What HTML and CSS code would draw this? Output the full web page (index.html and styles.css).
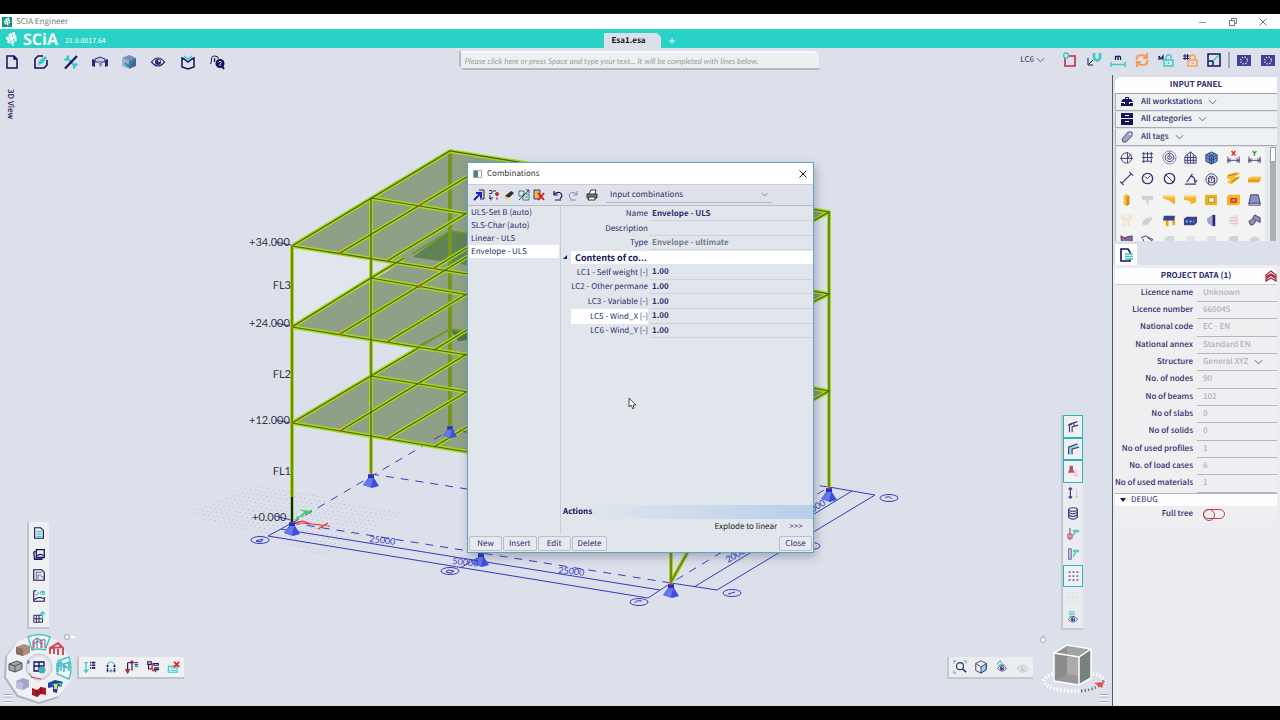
FILE: index.html
```html
<!DOCTYPE html>
<html lang="en">
<head>
<meta charset="utf-8">
<title>SCIA Engineer</title>
<link rel="stylesheet" href="styles.css">
</head>
<body>
<svg class="defs" aria-hidden="true">
  <symbol id="chev" viewBox="0 0 10 6"><path d="M1 1l4 4 4-4" fill="none" stroke="currentColor"/></symbol>
  <symbol id="support" viewBox="-9 -1 18 16"><path d="M-3 0h6v4l5 8-7 2-9-3 5-7z" fill="#3f4fdc"/><path d="M-2 4l-6 7 8 2 2-9z" fill="#6577ee"/><path d="M-3 1h6v3h-6z" fill="#2932a8"/></symbol>
  <symbol id="leaf" viewBox="0 0 12 14"><g fill="currentColor"><circle cx="8" cy="2.5" r="1.6"/><circle cx="5" cy="4" r="1.8"/><circle cx="9" cy="5.5" r="1.8"/><circle cx="2.5" cy="7" r="1.6"/><circle cx="6" cy="7.2" r="1.8"/><circle cx="9.7" cy="8.5" r="1.3"/><circle cx="3.5" cy="10" r="1.5"/><circle cx="7" cy="10.5" r="1.6"/></g><path d="M6 11l2 3" stroke="currentColor"/></symbol>
  <symbol id="eye" viewBox="0 0 16 16"><path d="M1.500 8q6.500-8 13 0-6.500 8-13 0z" fill="none" stroke="currentColor" stroke-width="1.200"/><circle cx="8" cy="8" r="3" fill="currentColor"/><circle cx="9" cy="7" r=".9" fill="#fff"/></symbol>
  <symbol id="film" viewBox="0 0 16 16"><path d="M1 3h14v11H1z" fill="#3f419b"/><circle cx="8" cy="8.5" r="3.4" fill="none" stroke="#fffbd0" stroke-width="1.2" stroke-dasharray="1.2 1.5"/></symbol>
  <symbol id="burger" viewBox="0 0 10 10"><path d="M1 1.5h8M1 5h8M1 8.5h8" stroke="#a3a7b5"/><path d="M1 2.5h8M1 6h8M1 9.5h8" stroke="#fff"/></symbol>
</svg>
<div class="app">
  <div class="titlebar">
    <span class="appicon"><svg width="8" height="9"><use href="#leaf"/></svg></span>
    <span class="apptitle">SCIA Engineer</span>
    <div class="wincontrols">
      <button aria-label="Minimize"><svg width="10" height="10"><path d="M1 5.500h7" stroke="#999"/></svg></button>
      <button aria-label="Restore"><svg width="10" height="10" fill="none" stroke="#777"><path d="M1.500 3.500h5v5h-5zM3.500 3V1.500h5v5H7"/></svg></button>
      <button aria-label="Close window"><svg width="10" height="10"><path d="M1.500 1.500l7 7M8.500 1.500l-7 7" stroke="#777"/></svg></button>
    </div>
  </div>
  <header class="brandbar">
    <div class="brand"><svg width="13" height="15"><use href="#leaf"/></svg><b>SCiA</b><small>21.0.0017.64</small></div>
    <div class="tabs"><button class="tab">Esa1.esa</button><button class="addtab" aria-label="New tab"><svg width="8" height="8"><path d="M4 1v6M1 4h6" stroke="#dff"/></svg></button></div>
  </header>
  <div class="toolbar">
    <nav class="mainmenu">
      <button aria-label="File"><svg viewBox="0 0 16 16" class="n"><path d="M3 2h7l3 3v9H3zM10 2v3h3" stroke-width="1.500"/></svg></button>
      <button aria-label="Edit"><svg viewBox="0 0 16 16" class="n"><path d="M10 2H5L2 5v9h9l3-3V6" stroke-width="1.600"/><path d="M5 11l1-4 6-5 2 2-5 6z" fill="#39c9c6" stroke="none"/></svg></button>
      <button aria-label="Tools"><svg viewBox="0 0 16 16" class="n"><path d="M4 4l8 8M1.500 5q3.500 2 3.500-3.500M14.500 11q-3.500-2-3.500 3.500" stroke="#39c9c6" stroke-width="2.400"/><path d="M2 14.500L14 2" stroke-width="2.200"/></svg></button>
      <button aria-label="Structure"><svg viewBox="0 0 16 16"><path d="M0 5l3 1v7l-3-1zM16 5l-3 1v7l3-1z" fill="#292a74"/><path d="M3 5l5-2 5 2v3H3z" fill="#c8cbdc" stroke="#292a74"/><path d="M6 7h4v5l-2 1-1-3z" fill="#8b8fad"/></svg></button>
      <button aria-label="Results"><svg viewBox="0 0 16 16"><path d="M1 4l7-3 7 3-7 3z" fill="#7f8ac0"/><path d="M1 4l7 3v8l-7-3z" fill="#9fb0cf"/><path d="M8 7l7-3v8l-7 3z" fill="#575b9b"/><path d="M4 9l3 3 6-7" fill="none" stroke="#21949f" stroke-width="2"/></svg></button>
      <button aria-label="View"><svg viewBox="0 0 16 16" class="navy"><use href="#eye"/></svg></button>
      <button aria-label="Libraries"><svg viewBox="0 0 16 16" class="n"><path d="M2 4v9l6 2 6-2V4l-2 1-4 3-4-3z" stroke-width="1.500"/><path d="M4 2l4 3 4-3" class="t"/></svg></button>
      <button aria-label="Help"><svg viewBox="0 0 16 16" class="n"><path d="M1.500 10l1-3q-1-5 3-5t4 3" stroke-width="1"/><path d="M5.500 4v4"/><circle cx="11" cy="9.500" r="4.500" fill="#15135c" stroke="none"/><path d="M13 12l2 3" stroke-width="2"/><path d="M9.500 8.500q1.500-3 3 0L11 10v2" stroke="#fff" stroke-width=".9"/></svg></button>
    </nav>
    <div class="searchwrap"><input class="search" aria-label="Command line" placeholder="Please click here or press Space and type your text... It will be completed with lines below."></div>
    <div class="viewtools">
      <label class="pick lc"><select aria-label="Load case"><option>LC6</option></select><svg class="chev" width="9" height="6"><use href="#chev"/></svg></label>
      <button aria-label="Selection"><svg viewBox="0 0 16 16" fill="none"><path d="M3 4h10v10H3z" stroke="#c5283c" stroke-width="1.600"/><circle cx="4" cy="3.500" r="2.500" class="t" fill="#dce0ea"/></svg></button>
      <button aria-label="Snap"><svg viewBox="0 0 16 16" class="n"><path d="M8 1v5q3 5 6 0V1" class="t thick"/><path d="M2 6v7h5M3 12l4-4" stroke-width="1"/></svg></button>
      <button aria-label="Units"><svg viewBox="0 0 16 16" class="n"><path d="M5.500 8V4M5.500 5q2.500-2 2.500 1v2M8 5q2.500-2 2.500 1v2" stroke-width="1.300"/><path d="M1 10v5M15 10v5M1 12.500h14" class="t"/></svg></button>
      <button aria-label="Regenerate"><svg viewBox="0 0 16 16" fill="none" stroke="#f79a5b" stroke-width="2"><path d="M2.500 8q0-5 5-5 3 0 5 2M13.500 8q0 5-5 5-3 0-5-2M13 1v5H9M3 15v-5h4"/></svg></button>
      <button aria-label="Lock model"><svg viewBox="0 0 16 16" class="n"><path d="M1 8V4M1 4l2 3 2-3v4" stroke-width="1.200"/><path d="M6 8h9v6H6zM8 8V5q2-4 5-1v3M10.500 10v2" class="t"/></svg></button>
      <button aria-label="Lock grid"><svg viewBox="0 0 16 16" class="n"><path d="M3 2v6M5.500 2v6M1 4h7M1 6.500h6" stroke-width="1"/><path d="M6 8h9v6H6zM8 8V5q2-4 5-1v4M10.500 10v2" stroke="#f5a45e" stroke-width="1.600"/></svg></button>
      <button aria-label="Fit window"><svg viewBox="0 0 16 16" class="n"><path d="M2 8V2h12v12H8" stroke-width="1.500"/><path d="M2 9h5v5H2z" stroke-width="1.500"/><path d="M7 9l6-6" class="t"/></svg></button>
      <span class="divider"></span>
      <button aria-label="View set 1"><svg><use href="#film"/></svg></button>
      <button aria-label="View set 2"><svg><use href="#film"/></svg></button>
    </div>
  </div>

  <div class="workspace">
    <main class="canvas">
      <span class="viewname">3D View</span>
      <svg class="scene" viewBox="0 75 1112 631" role="img" aria-label="3D frame structure">
        <defs><pattern id="dots" width="5" height="4" patternUnits="userSpaceOnUse" patternTransform="rotate(9) skewX(-35)"><rect width="1" height="1" fill="#b1b5be"/></pattern></defs>
        <path d="M185 514L256 484 406 512 325 556z" fill="url(#dots)"/>
        <path d="M292 246L371 258V278L292 327z" fill="#e1e5ed"/>
        <path d="M292 246L450 151 829 212 671 305z" fill="#90a086"/>
        <path d="M371 278L450 231 467 233V272L404 263z" fill="#90a086"/>
        <path d="M404 263L450 231 467 233V273z" fill="#608354"/>
        <path d="M292 327L412 257 467 265V355z" fill="#90a086"/>
        <path d="M371 376L450 329 467 331V391z" fill="#90a086"/>
        <path d="M416 347L450 329 467 331V355z" fill="#517449"/>
        <path d="M292 423L450 329 467 354V452z" fill="#90a086"/>
        <path d="M292 327L467 355V340L416 347z" fill="#90a086"/>
        <path d="M813 210L829 212 813 221zM813 291L829 294 813 302zM813 388L829 391 813 400z" fill="#829477"/>
        <g class="dash"><path d="M292 523L450 430L467 432M371 474L467 489M292 523L671 583L829 487L813 485"/></g>
        <g class="dim"><path d="M292 523L268 536L648 598L671 583L717 590L875 495L829 487M281 529L660 590M694 587L852 491M481 556L460 568"/>
          <ellipse cx="260" cy="540" rx="9" ry="3.500"/><ellipse cx="450" cy="571" rx="9" ry="3.500"/><ellipse cx="639" cy="602" rx="9" ry="3.500"/><ellipse cx="732" cy="593" rx="9" ry="3.500"/><ellipse cx="811" cy="546" rx="9" ry="3.500"/><ellipse cx="889" cy="498" rx="9" ry="3.500"/>
          <path d="M256 541l7-2-2 3zM446 572l2-2 6 1-3 2zM635 603q0-3 7-2M728 594l7-2M885 498q4-3 7 1"/></g>
        <path d="M275 242l16 3M275 323l16 3M275 420l16 3M275 516l16 4" stroke="#2932c4" fill="none"/>
        <path class="back" d="M450 151V427"/>
        <path d="M450 231L480 236M412 254L450 231M450 329L480 334M416 349L450 329" stroke="#6f9a1c" stroke-width="2" fill="none"/>
        <g class="beam">
          <path d="M292 246V523M371 198V473M829 212V487M671 545V582L690 548"/>
          <path d="M292 246L450 151L829 212L813 221M371 198L480 216M340 253L480 169M387 261L480 205M434 268L480 240M292 246L480 276"/>
          <path d="M292 327L371 278L404 258M371 278L480 297M340 334L480 249M387 342L480 286M434 350L480 322M292 327L480 357"/>
          <path d="M292 423L371 376L420 347M371 376L480 394M340 431L480 346M387 439L480 384M434 447L480 419M292 423L480 454"/>
          <path d="M813 291L829 294L813 302M813 388L829 391L813 400"/>
        </g>
        <g class="beamcore">
          <path class="post" d="M292 246V523M371 198V473M829 212V487M671 545V582L690 548"/>
          <path d="M292 246L450 151L829 212L813 221M371 198L480 216M340 253L480 169M387 261L480 205M434 268L480 240M292 246L480 276"/>
          <path d="M292 327L371 278L404 258M371 278L480 297M340 334L480 249M387 342L480 286M434 350L480 322M292 327L480 357"/>
          <path d="M292 423L371 376L420 347M371 376L480 394M340 431L480 346M387 439L480 384M434 447L480 419M292 423L480 454"/>
          <path d="M813 291L829 294L813 302M813 388L829 391L813 400"/>
        </g>
        <g fill="#e0552a"><path d="M291 245h2v2h-2zM339 252h2v2h-2zM386 260h2v2h-2zM433 267h2v2h-2zM418 205h2v2h-2zM291 326h2v2h-2zM339 333h2v2h-2zM386 341h2v2h-2zM418 286h2v2h-2zM291 422h2v2h-2zM339 430h2v2h-2zM386 438h2v2h-2zM418 383h2v2h-2zM370 472h2v2h-2zM828 486h2v2h-2zM670 582h2v2h-2z"/></g>
        <use href="#support" x="283" y="521" width="18" height="16"/><use href="#support" x="362" y="473" width="18" height="16"/><use href="#support" x="441" y="425" width="18" height="14"/><use href="#support" x="472" y="552" width="18" height="16"/><use href="#support" x="662" y="583" width="18" height="16"/><use href="#support" x="820" y="487" width="18" height="16"/>
        <path d="M292 497v25" stroke="#11146b" stroke-width="2"/>
        <g fill="none" stroke-width="1.200"><path d="M295 520l10-7h7M296 517l8-1M301 510l6 2 5-2M303 514l4-4" stroke="#2fd05a"/><path d="M293 522l18 2-8-3-6 1M311 524l19 2M318 529l10-6" stroke="#ee2532"/></g>
        <g class="lvl"><text x="249" y="246">+34.000</text><text x="249" y="327">+24.000</text><text x="249" y="424">+12.000</text><text x="252" y="521">+0.000</text></g>
        <g class="lvl" text-anchor="end"><text x="291" y="289">FL3</text><text x="291" y="378">FL2</text><text x="291" y="475">FL1</text></g>
        <g class="dimtext"><text transform="translate(369 542) rotate(6)">25000</text><text transform="translate(452 564) rotate(6)">50000</text><text transform="translate(558 573) rotate(6)">25000</text><text transform="translate(728 563) rotate(-30)">20000</text><text transform="translate(808 515) rotate(-30)">5000</text></g>
      </svg>

      <div class="strip views">
        <button aria-label="Document"><svg viewBox="0 0 16 16" class="n"><path d="M3 2h7l3 3v9H3z"/><path d="M5 6h6M5 8h6M5 10h6M5 12h6" class="t"/></svg></button>
        <button aria-label="Gallery"><svg viewBox="0 0 16 16" class="n"><path d="M5 3h9v9H5zM4 5L2 6l1 8h9" stroke-width="1.500"/><path d="M6 10q4-3 7 0"/></svg></button>
        <button aria-label="Drawing"><svg viewBox="0 0 16 16" class="n"><path d="M2 2h9l3 3v9H2z"/><path d="M5 13V5h6M7 13V8h4M10 10h3v3" stroke="#7779a7"/></svg></button>
        <button aria-label="Picture"><svg viewBox="0 0 16 16" class="n"><path d="M2 2h3M2 2v12h12V9M5 6v1M3 12q5-4 10-1"/><path d="M7 3v3M9 6l2-4M12 3h2v3h-2z" class="t"/></svg></button>
        <button aria-label="Table"><svg viewBox="0 0 16 16" class="n"><path d="M2 6h10v8H2zM2 10h10M5 6v8M8 6v8" stroke-width="1"/><path d="M12 10V3M9 5l3-3 3 3" class="t"/></svg></button>
      </div>

      <svg class="wheel" viewBox="0 0 84 76" aria-label="Workstations">
        <path d="M33 6L56 12 70 32 69 53 58 68 39 74 17 67 4 48 5 27 16 13z" fill="#aeb4c2"/>
        <path d="M34 4L57 10 72 31 71 51 59 66 39 72 18 65 6 47 7 26 17 12z" fill="#eef0f3"/>
        <path d="M28 7q11-5 22 0l-5 13q-6-2-13 0zM58 31l11-4q4 12 0 22l-12-5q3-6 1-13z" fill="#eef8fa" stroke="#42c4bf" stroke-width="1.400"/>
        <circle cx="39" cy="37" r="13" fill="#dfe2eb" stroke="#bfc4cf"/><circle cx="39" cy="37" r="10" fill="#eceff6"/>
        <g class="n" stroke-width="1.200"><path d="M34 32h5v4h-5zM39 32h5v4h-5zM34 36h5v5h-5z"/></g><circle cx="42" cy="40" r="3.500" fill="#47adb5"/>
        <g fill="none" stroke="#6c588f"><path d="M33 11v8M37 9v9M41 9v9M45 10v8M33 11l4-3 4 3 4-2M34 14l4-3 4 3"/></g><path d="M34 11v7M42 12v6" stroke="#d64556"/>
        <path d="M16 17l8-3 6 2v7l-7 3-7-2z" fill="#ae8c7e"/><path d="M16 17l7 2v7l-7-2z" fill="#8d6d64"/>
        <path d="M9 34l8-3 5 2v6l-7 3-6-2z" fill="#a0a3a8" stroke="#555"/><path d="M9 34l6 2 7-3M15 36v6" stroke="#555" fill="none"/>
        <path d="M16 51l7-3 6 2v7l-6 3-7-2z" fill="#a6a1cd"/><path d="M16 51l7 2v7l-7-2z" fill="#c2bddd"/>
        <path d="M32 58l5 2 4-3 5 1v7l-5-1-4 3-5-2z" fill="#a91927"/><path d="M37 60v7M41 57v7" stroke="#5e0e1b"/>
        <g fill="none" stroke="#d34b5b" stroke-width="2"><path d="M50 24v-6l8-5 5 5v7M54 24v-7M58 25v-8M50 18l12-1"/></g>
        <g fill="none" stroke="#43b6cb" stroke-width="1.500"><path d="M57 42v-8l4-2v9M64 42v-8l5-2v9M57 35l12 3M61 33l7 5"/></g>
        <path d="M48 53l7-3 8 2-2 5-3-1-1 7-4-1v-5l-5 1z" fill="#223bb6"/><path d="M51 54l8-1-2 4z" fill="#20c8a0"/><path d="M54 54h3v5h-3z" fill="#e4e52c"/><path d="M59 53l3 0-2 4z" fill="#3deb64"/>
        <path d="M29 43l3 4" stroke="#30bd63"/><path d="M31 47l10 2" stroke="#ee3844"/><path d="M27 31h2v2h-2" stroke="#4459c8" fill="none"/>
        <circle cx="67" cy="7" r="2.500" fill="#fff" stroke="#999da8"/><path d="M70 7h5" stroke="#fff" stroke-width="2"/>
      </svg>
      <div class="strip combos">
        <button aria-label="Load list"><svg viewBox="0 0 16 16" class="n"><path d="M3.500 3v11M1.500 3h4M1 11l2.500 3L6 11" class="t"/><path d="M8 3h1M8 6h1M8 9h1M10 3h4M10 6h4M10 9h4" stroke-width="1.800"/></svg></button>
        <button aria-label="Combination"><svg viewBox="0 0 16 16" class="n"><path d="M4 5v9M12 5v9M8 11v4" stroke-dasharray="2 2"/><path d="M4 5q4-6 8 0M6 12q2 3 4 0" class="t"/><path d="M3 7h2M11 7h2M3 12h2M11 12h2" stroke-width="2"/></svg></button>
        <button aria-label="Load group"><svg viewBox="0 0 16 16" class="n"><path d="M3 3v8M8 3v9"/><path d="M1 11h4l-2 4zM6 3h4L8 1z" fill="#bd2636" stroke="#bd2636"/><path d="M3 3h5M11 3h4M11 5h4M11 7h4" stroke-width="1"/></svg></button>
        <button aria-label="Load split"><svg viewBox="0 0 16 16" class="n" stroke-width="1"><path d="M2 2h4v3H2zM3 5v6M9 4h5v2H9zM10 9h4v2h-4z"/><path d="M7 3v8M4 10h3M7 12h4M11 11v3" stroke="#bd2636" stroke-width="1.600"/></svg></button>
        <button aria-label="Delete load"><svg viewBox="0 0 16 16"><path d="M1.500 7h10v7h-10zM3 9h1M5 9h5M3 12h1M5 12h5" class="t" fill="none"/><path d="M8 2l6 6M14 2L8 8" stroke="#f3101e" stroke-width="2"/></svg></button>
      </div>
      <svg class="burger left"><use href="#burger"/></svg>

      <div class="strip render">
        <button class="on" aria-label="Wireframe"><svg viewBox="0 0 16 16" class="n"><path d="M4 15V6l9-3M7 15V9l7-2M2 7l5-1M9 4v4"/></svg></button>
        <button class="on" aria-label="Surfaces"><svg viewBox="0 0 16 16" class="n"><path d="M3 14V6l3-2 8-2v4L7 8v6z" fill="#84d7df" stroke="none"/><path d="M3 14V6l10-4M7 14V8l8-2"/></svg></button>
        <button class="on" aria-label="Supports"><svg viewBox="0 0 16 16"><path d="M4 6V2h4v4l2 4H2l2-4z" fill="#b8323f"/><path d="M10 10V7h3v3l2 4H8z" fill="#f3cfd3"/></svg></button>
        <button aria-label="Loads"><svg viewBox="0 0 16 16" class="n"><path d="M5 3v10M3 4l2-2 2 2M3 12l2 2 2-2"/><path d="M12 3v10M10 11l2 2 2-2" stroke="#c8ccd2"/></svg></button>
        <button aria-label="Labels"><svg viewBox="0 0 16 16" class="n"><ellipse cx="8" cy="4" rx="5" ry="2"/><path d="M3 4v9q5 4 10 0V4M3 7q5 4 10 0M3 10q5 4 10 0"/></svg></button>
        <button aria-label="Node labels"><svg viewBox="0 0 16 16"><path d="M4.500 1v14" stroke="#56568d" stroke-width="1.500"/><path d="M2 8h5v5H2z" fill="#d98b92" stroke="#b8323f"/><path d="M8 3h7v3h-3l-4 5v-3l2-2H8z" fill="#3dc4b8"/></svg></button>
        <button aria-label="Member labels"><svg viewBox="0 0 16 16"><path d="M3 2h3v12H3z" fill="#ccd" stroke="#35357a"/><path d="M8 3h7v3h-3l-4 7V9l2-3H8z" fill="#3dc4b8"/></svg></button>
        <button class="on" aria-label="Point grid"><svg viewBox="0 0 16 16"><path d="M3 3.500h11M3 8h11M3 12.500h11" stroke="#4a4988" stroke-width="2" stroke-dasharray="2 2.500"/></svg></button>
        <button aria-label="Line grid"><svg viewBox="0 0 16 16"><path d="M3 2v12M8 2v12M13 2v12M2 3h12M2 8h12M2 13h12" stroke="#d5d9dc" stroke-dasharray="1 1"/></svg></button>
        <button aria-label="Visibility"><svg viewBox="0 0 16 16" class="navy"><path d="M3 1h7M3 3.500h7M3 6h7" class="t"/><use href="#eye" y="3" height="13"/></svg></button>
      </div>
      <div class="strip zooms">
        <button aria-label="Zoom all"><svg viewBox="0 0 16 16" class="n"><path d="M1 4V1h3M12 1h3v3M1 12v3h3" class="t"/><circle cx="8" cy="7" r="4"/><path d="M11 10l4 4" stroke-width="2"/></svg></button>
        <button aria-label="Perspective"><svg viewBox="0 0 16 16" class="n"><path d="M2 4l6-3 6 3v7l-6 4-6-3z" stroke-width="1"/><path d="M8 8l6-4v7l-6 4z" fill="#7fd5db" stroke-width="1"/><path d="M2 4l6 4" stroke-width="1"/></svg></button>
        <button aria-label="Layers"><svg viewBox="0 0 16 16" class="navy"><path d="M2 5l4-4 2 3M4 7q3-4 7-1" class="t" fill="none"/><use href="#eye" y="3" height="13"/></svg></button>
        <button aria-label="Hidden layers" class="dim-btn"><svg viewBox="0 0 16 16" class="navy"><use href="#eye" y="2"/></svg></button>
      </div>
      <svg class="cube" viewBox="0 0 76 62" aria-label="View cube">
        <ellipse cx="38" cy="46" rx="30" ry="10" fill="none" stroke="#fff" stroke-width="4" stroke-dasharray="1.500 2"/>
        <path d="M45 56Q64 54 68 45" fill="none" stroke="#6f7375" stroke-width="3" stroke-dasharray="1.500 2"/>
        <path d="M18 18l13-8 24 4v29l-12 7-25-4z" fill="#a2a2a4"/><path d="M18 18l25 4v28l-25-4z" fill="#969699"/><path d="M43 22l12-8v29l-12 7z" fill="#7c7f80"/><path d="M31 10v29l-13 7V18z" fill="#7f8083" opacity=".5"/><path d="M31 22v17l12 2V22z" fill="#b9b9bb" opacity=".6"/>
        <path d="M18 18l13-8 24 4v29l-12 7-25-4zM18 18l25 4 12-8M43 22v28" fill="none" stroke="#fff" stroke-width="1.500"/>
        <path d="M47 39l5-3M47 35l5 3" stroke="#3fa35a"/><path d="M58 48l10-1-2 6z" fill="#ef4f4c"/>
        <circle cx="7" cy="5" r="2.500" fill="#fff" stroke="#aaa"/><path d="M7 0v3" stroke="#aaa"/>
      </svg>
      <svg class="burger right"><use href="#burger"/></svg>

      <section class="dialog" role="dialog" aria-label="Combinations">
        <div class="dlg-title"><svg width="9" height="8"><path d="M.5.500h8v7h-8z" fill="#fff" stroke="#9aa"/><path d="M1 1h4v6H1z" fill="#4a8584"/></svg><span>Combinations</span><button aria-label="Close dialog"><svg width="8" height="8"><path d="M.5.500l7 7M7.500.500l-7 7" stroke="#222"/></svg></button></div>
        <div class="dlg-tools">
          <button aria-label="New combination"><svg viewBox="0 0 12 12"><path d="M6 1h5v9H7" fill="#e9d756" stroke="#2221a0"/><path d="M1 11l7-7M3 4h5v5" stroke="#1522c4" stroke-width="2" fill="none"/></svg></button>
          <button aria-label="Insert combination"><svg viewBox="0 0 12 12" fill="none" stroke="#333655"><path d="M1 1.500h3v3H1M2 6v3h3M5 2h3M1 9.500h2v2"/><circle cx="9" cy="5" r="1.500" fill="#b52f43" stroke="#b52f43"/><path d="M9 8v3" stroke="#b52f43"/></svg></button>
          <button aria-label="Edit combination"><svg viewBox="0 0 12 12"><path d="M2 7l6-5 3 2-5 5z" fill="#333126"/><path d="M1 9l6-1-1 2H2z" fill="#e5d940"/></svg></button>
          <button aria-label="Copy combination"><svg viewBox="0 0 12 12" fill="#e6ecd8" stroke="#397e84"><path d="M1 2h5v5H1zM5 5h6v6H5zM7 8h3"/><path d="M1 11L11 1M8 1h3v3" fill="none" stroke="#2c47a8"/></svg></button>
          <button aria-label="Delete combination"><svg viewBox="0 0 12 12"><path d="M1 1h6v9H1z" fill="#e8bd3c" stroke="#3a388a"/><path d="M5 4l6 7M11 4l-6 7" stroke="#e51520" stroke-width="1.800"/></svg></button>
          <button class="gap" aria-label="Undo"><svg viewBox="0 0 12 12" class="n"><path d="M2 2v4h4M2 5q7-4 8 2l-2 3M3 11h6" stroke-width="1.200"/></svg></button>
          <button aria-label="Redo"><svg viewBox="0 0 12 12" fill="none" stroke="#8a8da5"><path d="M10 2v4H6M10 5Q3 1 2 7l2 3M3 11h6"/></svg></button>
          <button class="gap" aria-label="Print"><svg viewBox="0 0 12 12"><path d="M3 5l2-4h5L9 5" fill="#fff" stroke="#333"/><path d="M1 5h10v4H1z" fill="#767b75" stroke="#333"/><path d="M3 8h6v3H2z" fill="#f2f2ec" stroke="#333"/></svg></button>
          <label class="pick kind"><select aria-label="Combination type"><option>Input combinations</option></select><svg class="chev" width="7" height="5"><use href="#chev"/></svg></label>
        </div>
        <div class="dlg-body">
          <ul class="combo-list"><li>ULS-Set B (auto)</li><li>SLS-Char (auto)</li><li>Linear - ULS</li><li class="sel">Envelope - ULS</li></ul>
          <div class="props">
            <div class="prop-grid">
              <div class="prop"><label for="p1">Name</label><input id="p1" value="Envelope - ULS"></div>
              <div class="prop"><label for="p2">Description</label><input id="p2" value=""></div>
              <div class="prop"><label for="p3">Type</label><input id="p3" class="ro" value="Envelope - ultimate" readonly></div>
              <div class="prop-head"><svg width="4" height="4"><path d="M4 0v4H0z" fill="#15135c"/></svg><b>Contents of co...</b></div>
              <div class="prop"><label for="p4">LC1 - Self weight [-]</label><input id="p4" value="1.00"></div>
              <div class="prop"><label for="p5">LC2 - Other permane</label><input id="p5" value="1.00"></div>
              <div class="prop"><label for="p6">LC3 - Variable [-]</label><input id="p6" value="1.00"></div>
              <div class="prop sel"><label for="p7">LC5 - Wind_X [-]</label><input id="p7" value="1.00"></div>
              <div class="prop"><label for="p8">LC6 - Wind_Y [-]</label><input id="p8" value="1.00"></div>
            </div>
            <div class="actions"><h3>Actions</h3><div class="action"><span>Explode to linear</span><button>&gt;&gt;&gt;</button></div></div>
          </div>
        </div>
        <div class="dlg-foot"><button>New</button><button>Insert</button><button>Edit</button><button>Delete</button><button class="close">Close</button></div>
      </section>
      <svg class="pointer" viewBox="0 0 9 13" aria-hidden="true"><path d="M1 1v9l2-2 2 4 1-1-1-3h3z" fill="#fff" stroke="#222" stroke-width=".8"/></svg>
    </main>

    <aside class="side">
      <h2>INPUT PANEL</h2>
      <div class="filters">
        <label class="filter"><svg viewBox="0 0 12 12"><path d="M4 3V1h4v2h2l2 3v4H0V6l2-3z" fill="#15135c"/><path d="M5 2h2v1H5zM0 6h3v1H0zM9 6h3v1H9zM3 6h1v2H3zM8 6h1v2H8z" fill="#fff"/></svg><span class="pick"><select aria-label="Workstations"><option>All workstations</option></select><svg class="chev" width="9" height="6"><use href="#chev"/></svg></span></label>
        <label class="filter"><svg viewBox="0 0 12 12"><path d="M0 0h12v5H0zM0 6h12v6H0z" fill="#15135c"/><path d="M4 2h4v1H4zM4 8h4v1H4z" fill="#fff"/></svg><span class="pick"><select aria-label="Categories"><option>All categories</option></select><svg class="chev" width="9" height="6"><use href="#chev"/></svg></span></label>
        <label class="filter"><svg viewBox="0 0 12 12"><path d="M1 8l6-7h4v4l-6 6H2z" fill="#9fa3c6" stroke="#545688"/><circle cx="9" cy="3" r="1" fill="#fff"/></svg><span class="pick"><select aria-label="Tags"><option>All tags</option></select><svg class="chev" width="9" height="6"><use href="#chev"/></svg></span></label>
      </div>
      <div class="palette">
        <div class="tiles">
          <svg viewBox="0 0 16 16" class="s"><circle cx="8" cy="8.500" r="5.500"/><path d="M1 9h14M9 2v12M9 9l4-5"/></svg>
          <svg viewBox="0 0 16 16" class="s"><path d="M4 2v12M8 2v10M12 2v12M2 4h12M2 8h12M2 12h10"/></svg>
          <svg viewBox="0 0 16 16" class="s"><circle cx="8" cy="8" r="7" stroke="#888aab"/><circle cx="8" cy="8" r="4.500"/><circle cx="8" cy="8" r="2"/><path d="M8 1v8h7" stroke="#888aab"/></svg>
          <svg viewBox="0 0 16 16" class="s"><path d="M2 14V7l6-5 6 5v7zM5 14V5M8 14V2M11 14V5M2 8h12M2 11h12"/></svg>
          <svg viewBox="0 0 16 16" class="s"><path d="M2 5l6-3 6 3v7l-6 3-6-3z" fill="#5ca6cf"/><path d="M2 5l6 3 6-3M2 8l6 3 6-3M8 8v7M5 4l5 3v7M11 4L6 7v7"/></svg>
          <svg viewBox="0 0 16 16" class="s"><path d="M2 7v7M14 7v7M2 11h12M5 9l-3 2 3 2M11 9l3 2-3 2"/><path d="M6 1l4 5M10 1L6 6" stroke="#e42734" stroke-width="1.500"/></svg>
          <svg viewBox="0 0 16 16" class="s"><path d="M2 7v7M14 7v7M2 11h12M5 9l-3 2 3 2M11 9l3 2-3 2"/><path d="M6 1l2 2.500L10 1M8 3v3" stroke="#25a83e" stroke-width="1.500"/></svg>
          <svg viewBox="0 0 16 16" class="s"><path d="M3 13L13 3M1 11l4 4M11 1l4 4M7 9l2-2" stroke-width="1.300"/></svg>
          <svg viewBox="0 0 16 16" class="s"><circle cx="8" cy="8" r="5.500" stroke-width="1.500"/><path d="M8 8l3-3M5 6l3 2"/></svg>
          <svg viewBox="0 0 16 16" class="s"><circle cx="8" cy="8" r="5.500" stroke-width="1.500"/><path d="M4 4l8 8"/></svg>
          <svg viewBox="0 0 16 16" class="s"><path d="M2 14h12M4 12l6-9M8 5q4 1 5 6M12 9l1 3 2-2" stroke-width="1.300"/></svg>
          <svg viewBox="0 0 16 16" class="s"><circle cx="8" cy="9" r="6"/><circle cx="8" cy="9" r="3.500"/><path d="M5 14V9q3-4 6 0v5M8 8v3"/></svg>
          <svg viewBox="0 0 16 16"><path d="M1 4l11-3 3 2-6 3 6 1-9 7-5-2 4-3-4-1z" fill="#f5bd2f"/><path d="M3 5l8-2M6 12l8-6" stroke="#9d6b13"/></svg>
          <svg viewBox="0 0 16 16"><path d="M1 8l3-2h11v3l-2 3H1z" fill="#f4bd35"/><path d="M1 9h12v3H1z" fill="#e59b17"/></svg>
          <svg viewBox="0 0 16 16"><path d="M5 4l3-2 3 2v9l-3 2-3-2z" fill="#f4bd35"/><path d="M8 5l3-1v9l-3 2z" fill="#d58d15"/></svg>
          <svg viewBox="0 0 16 16"><path d="M2 4h12v4l-5 1v4H7V9L2 8z" fill="#cfd1d5"/></svg>
          <svg viewBox="0 0 16 16"><path d="M1 4h13v9l-3-1-3-3-7-2z" fill="#f1b527"/><path d="M1 4h13v2H1z" fill="#f9d35f"/></svg>
          <svg viewBox="0 0 16 16"><path d="M1 4h13v7l-6 2v-3L1 8z" fill="#f1b527"/><path d="M1 4h13v2H1z" fill="#f9d35f"/></svg>
          <svg viewBox="0 0 16 16"><path d="M1 3h13v11H1z" fill="#edb01e"/><path d="M5 6h6v5H5z" fill="#fffbe2" stroke="#c17e10"/></svg>
          <svg viewBox="0 0 16 16"><path d="M1 5l2-2h12v9l-2 2H1z" fill="#f1b527"/><path d="M5 7h6v4H5z" fill="#e37b61" stroke="#b6252d"/></svg>
          <svg viewBox="0 0 16 16" class="s"><path d="M4 3h8l2 9H2z" fill="#8b91bd"/><path d="M2 12v2h12v-2"/></svg>
          <svg viewBox="0 0 16 16" class="off"><path d="M2 2h4v3h4V2h4v4l-2 1v7H9V8H7v6H4V7L2 6z" fill="#efdcb6"/></svg>
          <svg viewBox="0 0 16 16"><path d="M2 9l5-4 7 0-6 8H3z" fill="#d7d8df"/><path d="M3 12l8-8M6 12l7-7" stroke="#bfc1cc"/></svg>
          <svg viewBox="0 0 16 16"><path d="M4 7h3v7H4zM11 7h3v6h-3z" fill="#eca820"/><path d="M2 3h12l-1 5H1z" fill="#3d4290"/></svg>
          <svg viewBox="0 0 16 16"><path d="M1 6l3-2h11v6l-3 3H1z" fill="#3d4290"/><path d="M3 9h2M7 9h2M11 9h1" stroke="#5fc8e8" stroke-width="2"/></svg>
          <svg viewBox="0 0 16 16"><path d="M3 6l6-4v12L4 11z" fill="#a1a4c8"/><path d="M9 2h3v12H9z" fill="#292a74"/></svg>
          <svg viewBox="0 0 16 16"><path d="M3 6l6-4h4v12H8l-5-4z" fill="#f3dfe4"/><path d="M5 5h8M4 8h9M5 11h8" stroke="#dcc0c8"/></svg>
          <svg viewBox="0 0 16 16" class="s"><path d="M2 9l4-3 2-4 6 3v5l-4-2-3 4-3 1z" fill="#8b91bd"/><path d="M6 6l4 2M2 9l2 3" stroke="#d03749"/></svg>
          <svg viewBox="0 0 16 16" class="s"><path d="M2 2l4 2 3-1 5-1v8H3z" fill="#7378ab"/><path d="M2 3l11 4" stroke="#d03749"/></svg>
          <svg viewBox="0 0 16 16" class="s"><path d="M1 4l5-2 8 4M3 5l2 6M8 4l6 4"/></svg>
          <svg viewBox="0 0 16 16"><path d="M3 4l3-2h7v9H3z" fill="#d8d9dc"/></svg>
          <svg viewBox="0 0 16 16"><path d="M3 4l3-2h7v9H3z" fill="#e2e3e6"/></svg>
          <svg viewBox="0 0 16 16"><path d="M3 4l3-2h7v9H3z" fill="#dedfe2"/></svg>
          <svg viewBox="0 0 16 16"><path d="M3 4l3-2h7v9H3z" fill="#d2d3d8"/></svg>
          <svg viewBox="0 0 16 16"><path d="M3 5l5-3 5 3v7H3z" fill="#d2d3d8"/></svg>
        </div>
        <div class="scroll"><span></span></div>
      </div>
      <button class="proptab" aria-label="Properties"><svg viewBox="0 0 16 16" class="n"><path d="M12 7V5l-2-3H3v12h9v-2" stroke-width="1.600"/><path d="M7 7h8M7 9.500h8M7 12h8" class="t"/></svg></button>
      <h2 class="pd">PROJECT DATA (1)<svg width="12" height="12" fill="none" stroke="#a3283f" stroke-width="1.300"><path d="M1 7V5l5-4 5 4v2L6 4zM1 11V9l5-4 5 4v2L6 8z"/></svg></h2>
      <div class="data">
        <div class="row"><label for="d1">Licence name</label><input id="d1" value="Unknown" readonly></div>
        <div class="row"><label for="d2">Licence number</label><input id="d2" value="660045" readonly></div>
        <div class="row"><label for="d3">National code</label><input id="d3" value="EC - EN" readonly></div>
        <div class="row"><label for="d4">National annex</label><input id="d4" value="Standard EN" readonly></div>
        <div class="row"><label for="d5">Structure</label><span class="pick field"><select id="d5"><option>General XYZ</option></select><svg class="chev" width="9" height="6"><use href="#chev"/></svg></span></div>
        <div class="row"><label for="d6">No. of nodes</label><input id="d6" value="90" readonly></div>
        <div class="row"><label for="d7">No of beams</label><input id="d7" value="102" readonly></div>
        <div class="row"><label for="d8">No of slabs</label><input id="d8" value="0" readonly></div>
        <div class="row"><label for="d9">No of solids</label><input id="d9" value="0" readonly></div>
        <div class="row"><label for="d10">No of used profiles</label><input id="d10" value="1" readonly></div>
        <div class="row"><label for="d11">No. of load cases</label><input id="d11" value="6" readonly></div>
        <div class="row"><label for="d12">No of used materials</label><input id="d12" value="1" readonly></div>
      </div>
      <h3 class="debug"><svg width="6" height="4"><path d="M0 0h6L3 4z" fill="#15135c"/></svg>DEBUG</h3>
      <div class="row tree"><label for="full">Full tree</label><input id="full" type="checkbox" class="switch"></div>
    </aside>
  </div>
</div>
</body>
</html>
```
FILE: styles.css
```css
* { box-sizing: border-box; }
body { margin: 0; padding: 14px 0; background: #000; font-family: "Noto Sans CJK SC", "Open Sans", sans-serif; font-size: 8px; line-height: 14px; color: #2d2c6c; text-rendering: geometricPrecision; }
button, input, select { font: inherit; color: inherit; background: none; border: 0; padding: 0; margin: 0; outline: 0; text-rendering: inherit; }
h2, h3, ul { margin: 0; padding: 0; font-size: inherit; list-style: none; }
button { display: inline-flex; align-items: center; justify-content: center; white-space: nowrap; }
button svg { display: block; }
select { appearance: none; field-sizing: content; }
.defs { position: absolute; width: 0; height: 0; }
.n { fill: none; stroke: #15135c; stroke-width: 1.3; }
.t { stroke: #39c9c6; stroke-width: 1.4; }
.thick { stroke-width: 2.6; }
.navy { color: #2a286e; }
.pick { display: inline-flex; align-items: center; gap: 6px; }
.chev { color: #55577f; pointer-events: none; flex: none; }
.app { display: flex; flex-direction: column; min-height: calc(100vh - 28px); background: #dce0ea; }

.titlebar { display: flex; align-items: center; height: 15px; background: #fff; color: #777; padding-left: 2px; gap: 4px; }
.appicon { width: 10px; height: 10px; background: #168d85; color: #fff; display: flex; align-items: center; justify-content: center; }
.wincontrols { margin-left: auto; display: flex; gap: 20px; padding-right: 12px; }
.brandbar { display: grid; grid-template-columns: 1fr auto 1fr; background: #29d2c7; height: 19px; }
.brand { display: flex; align-items: center; gap: 5px; color: #fff; padding-left: 5px; }
.brand b { font: bold 16px/16px "Open Sans", sans-serif; }
.brand small { font-size: 7px; padding-top: 5px; margin-left: 2px; }
.tabs { display: flex; align-items: flex-end; width: 72px; gap: 7px; }
.tab { background: #dce0ea; color: #111; font-weight: bold; width: 57px; height: 15px; padding-right: 8px; flex: none; clip-path: polygon(0 0, 53px 0, 100% 4px, 100% 100%, 0 100%); }
.addtab { height: 14px; }

.toolbar { display: grid; grid-template-columns: 1fr 361px 1fr; height: 27px; align-items: center; }
.mainmenu { display: flex; justify-content: space-between; width: 221px; margin-left: 4px; }
.mainmenu svg, .viewtools button svg { width: 16px; height: 16px; }
.searchwrap { background: #b4b9c3; padding: 0 0 2px 2px; height: 19px; margin: 0 1px 2px -1px; clip-path: polygon(0 0, 357px 0, 100% 4px, 100% 100%, 5px 100%, 0 14px); }
.search { width: 100%; height: 17px; background: #eeefef; border-top: 2px solid #fafbfc; padding-left: 4px; font: italic 8px Lato, sans-serif; display: block; }
.search::placeholder { color: #9a9da3; opacity: 1; }
.viewtools { display: flex; justify-content: flex-end; align-items: center; gap: 8px; padding-right: 4px; margin-bottom: 4px; }
.lc { margin-right: 9px; gap: 2px; }
.divider { width: 2px; height: 16px; background: #a4a9b5; margin: 0 -2px; }

.workspace { flex: 1; display: grid; grid-template-columns: 1fr 168px; }
.canvas { position: relative; min-width: 0; }
.scene { position: absolute; inset: 0; width: 100%; height: 100%; }
.viewname { position: absolute; left: 3px; top: 14px; writing-mode: vertical-rl; color: #15135c; font-weight: 500; }
.beam { fill: none; stroke: #a9d719; stroke-width: 4; stroke-linejoin: round; }
.beamcore { fill: none; stroke: #46611c; stroke-width: 1.2; }
.post { stroke: #6f8a1c; stroke-width: 2; }
.back { fill: none; stroke: #78951e; stroke-width: 4; }
.dash { fill: none; stroke: #3a3cbd; stroke-dasharray: 8 7; }
.dim { fill: none; stroke: #3739bf; }
.lvl { font: 11px Lato, sans-serif; fill: #33363f; }
.dimtext { font: 9px Lato, sans-serif; fill: #3235c4; }

.strip { position: absolute; display: flex; background: #eff0f2; box-shadow: -1px 1px 0 1px #bec3ce; }
.strip svg { width: 14px; height: 14px; }
.views { left: 29px; bottom: 79px; width: 20px; flex-direction: column; }
.views button { height: 21px; }
.combos { left: 79px; bottom: 29px; height: 20px; }
.combos button, .zooms button { width: 21px; height: 20px; }
.zooms { right: 79px; bottom: 29px; height: 20px; opacity: .85; }
.render { right: 29px; bottom: 78px; width: 20px; height: 213px; flex-direction: column; opacity: .8; }
.render button { flex: 1 1 0; min-height: 0; }
.render .on { border: 1px solid #00aaa2; background: #f5f6f8; }
.dim-btn { opacity: .2; }
.wheel { position: absolute; left: 0; bottom: 0; width: 84px; height: 76px; }
.cube { position: absolute; right: 0; bottom: 9px; width: 76px; height: 62px; }
.burger { position: absolute; bottom: 3px; width: 10px; height: 10px; }
.burger.left { left: 3px; }
.burger.right { right: 3px; }
.pointer { position: absolute; left: 628px; top: 322px; width: 9px; height: 13px; }

.dialog { position: absolute; left: 467px; top: 87px; width: 347px; height: 391px; display: flex; flex-direction: column; background: #e1e6ed; border: 1px solid #5fa6bd; box-shadow: 2px 4px 9px rgba(60, 70, 100, .35); }
.dlg-title { display: flex; align-items: center; gap: 5px; height: 21px; background: #fff; color: #333; padding: 0 6px 0 5px; }
.dlg-title button { margin-left: auto; }
.dlg-tools { display: flex; align-items: center; height: 22px; gap: 3px; padding-left: 5px; border-top: 1px solid #c9cdd5; border-bottom: 1px solid #b8bdc9; background: #dfe2ea; }
.dlg-tools button svg { width: 12px; height: 12px; }
.dlg-tools .gap { margin-left: 4px; }
.kind { width: 166px; margin-left: 5px; padding: 0 4px; border-bottom: 1px solid #b2b6c1; }
.kind select { flex: 1; }
.dlg-body { flex: 1; display: grid; grid-template-columns: 93px 1fr; min-height: 0; }
.combo-list { border-right: 1px solid #bfc4cf; padding: 0 1px; display: grid; grid-auto-rows: 1fr; height: 51px; line-height: 13px; align-self: start; }
.combo-list li { padding-left: 2px; }
.combo-list .sel { background: #fff; }
.props { display: flex; flex-direction: column; justify-content: space-between; min-width: 0; border-left: 1px solid #c5cad4; margin-left: -1px; }
.prop-grid { display: grid; grid-auto-rows: 1fr; height: 132px; }
.prop { display: grid; grid-template-columns: 77px 1fr; gap: 2px; padding-left: 10px; min-height: 0; line-height: 14px; }
.prop label { text-align: right; white-space: nowrap; padding-top: 1px; }
.prop input { border-bottom: 1px solid #cdd2db; font-weight: bold; padding-left: 2px; min-width: 0; height: 100%; }
.prop .ro { color: #777c8a; }
.prop.sel label { background: #fff; }
.prop-head { display: flex; align-items: center; gap: 4px; padding-left: 2px; }
.prop-head b { flex: 1; background: #fff; padding-left: 4px; font-size: 9px; line-height: 13px; color: #15135c; }
.actions h3 { background: linear-gradient(90deg, #e1e6ed 10%, #b7cfe9); padding-left: 2px; color: #15135c; }
.action { display: flex; justify-content: flex-end; color: #222; line-height: 15px; }
.action button { width: 35px; border-left: 1px solid #f4f5f7; margin-left: 1px; color: #2d2c6c; }
.dlg-foot { display: flex; gap: 1px; padding: 2px 1px 1px; height: 18px; }
.dlg-foot button { min-width: 33px; padding: 0 5px; border: 1px solid #b9bfcb; border-radius: 2px; background: #e6eaf0; }
.dlg-foot .close { margin-left: auto; }

.side { border-left: 1px solid #555a68; padding: 2px 3px 0 2px; background: linear-gradient(#dce0ea 190px, #ebedf1 190px); }
.side h2 { position: relative; background: #fdfdfe; border-bottom: 1px solid #9da2ad; height: 17px; line-height: 16px; text-align: center; clip-path: polygon(4px 0, 100% 0, 100% 100%, 0 100%, 0 4px); }
.side h2 svg { position: absolute; right: 0; top: 2px; }
.filters { display: grid; grid-auto-rows: 1fr; gap: 1px; height: 52px; }
.filter { display: flex; align-items: center; gap: 8px; background: #eff0f2; padding-left: 5px; border: solid #a9adb6; border-width: 0 0 1px 1px; font-weight: 500; }
.filter > svg { width: 12px; height: 12px; }
.palette { display: flex; justify-content: space-between; height: 94px; border-left: 1px solid #b4b8c1; margin-top: 1px; background: #e7e9ee; padding-right: 1px; }
.tiles { display: grid; grid-template-columns: repeat(7, 1fr); grid-auto-rows: 21px; width: 149px; overflow: hidden; background: #f3f3f3; place-items: center; }
.tiles svg { width: 15px; height: 15px; }
.s { fill: none; stroke: #3b3b78; }
.off { opacity: .6; }
.scroll { width: 6px; background: #adb0b5; }
.scroll span { display: block; height: 15px; background: #fbfbfc; border: 1px solid #9a9da6; }
.proptab { background: #fff; width: 22px; height: 21px; margin-top: 3px; }
.proptab svg { width: 16px; height: 16px; }
.side .pd { clip-path: polygon(0 0, 158px 0, 100% 4px, 100% 100%, 0 100%); }
.data { display: grid; grid-auto-rows: 1fr; height: 208px; background: #efeff1; }
.row { display: grid; grid-template-columns: 78px 1fr; gap: 4px; align-items: stretch; min-height: 0; }
.row label { text-align: right; white-space: nowrap; line-height: 16px; font-weight: 500; }
.row > input, .field { border-bottom: 1px solid #b3b6bc; padding-left: 6px; color: #b0b2b9; font-weight: 500; min-width: 0; }
.debug { background: #fdfdfe; border-top: 1px solid #b3b6bc; height: 13px; line-height: 12px; padding-left: 5px; font-weight: 400; display: flex; align-items: center; gap: 5px; }
.tree { background: #efeff1; height: 16px; align-items: center; }
.row > .switch { appearance: none; width: 22px; height: 10px; border: 1px solid #b64655; border-radius: 5px; margin-left: 6px; position: relative; padding: 0; }
.switch::before { content: ""; position: absolute; left: -1px; top: -1px; width: 10px; height: 10px; border: 1px solid #b64655; border-radius: 50%; }
```
